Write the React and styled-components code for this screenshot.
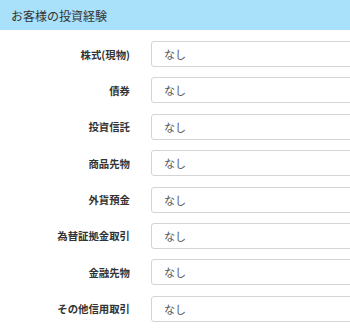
import React from "react";
import styled, { createGlobalStyle } from "styled-components";

const Global = createGlobalStyle`
  html, body { margin: 0; padding: 0; background: #fff; overflow: hidden; }
  body { font-family: "Noto Sans CJK JP", "Noto Sans", sans-serif; color: #333; }
`;

const Page = styled.div`
  width: 350px;
  overflow: hidden;
`;

const Header = styled.div`
  height: 30px;
  background: #a9e0fa;
  display: flex;
  align-items: center;
  padding-left: 11px;
  font-size: 12px;
  color: #333;
`;

const Form = styled.div`
  display: grid;
  grid-template-columns: 130px 230px;
  column-gap: 21px;
  row-gap: 10.4px;
  padding-top: 11px;
`;

const Label = styled.div`
  text-align: right;
  font-size: 10.4px;
  font-weight: bold;
  color: #333;
  display: flex;
  align-items: center;
  justify-content: flex-end;
  height: 26px;
`;

const Field = styled.div`
  box-sizing: border-box;
  height: 26px;
  border: 1px solid #d4d4d4;
  border-radius: 3px;
  display: flex;
  align-items: center;
  padding-left: 12px;
  font-size: 11px;
  color: #555;
`;

const items = [
  "株式(現物)",
  "債券",
  "投資信託",
  "商品先物",
  "外貨預金",
  "為替証拠金取引",
  "金融先物",
  "その他信用取引",
];

export default function App() {
  return (
    <Page>
      <Global />
      <Header>お客様の投資経験</Header>
      <Form>
        {items.map((label) => (
          <React.Fragment key={label}>
            <Label>{label}</Label>
            <Field>なし</Field>
          </React.Fragment>
        ))}
      </Form>
    </Page>
  );
}
